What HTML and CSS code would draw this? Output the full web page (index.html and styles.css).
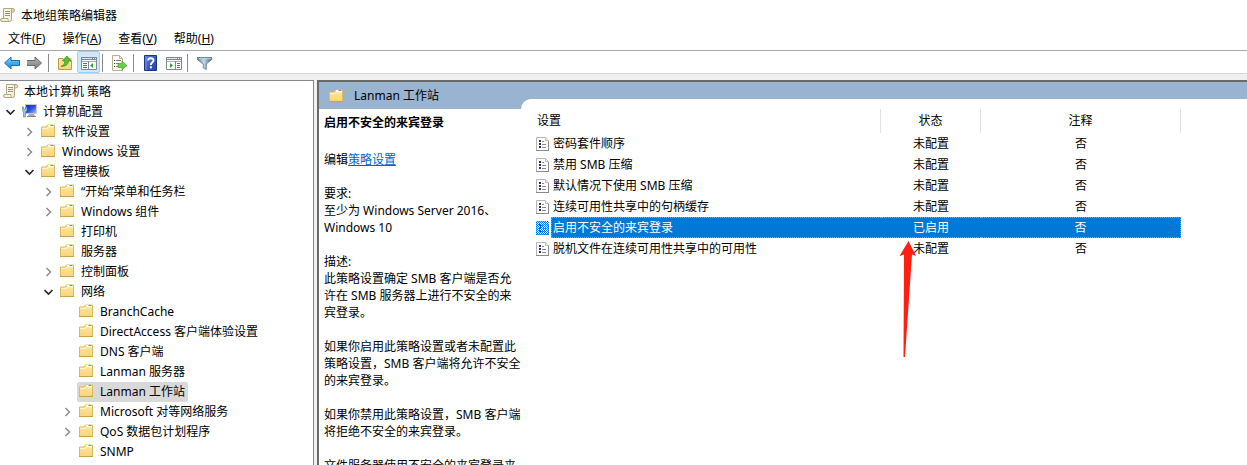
FILE: index.html
```html
<!DOCTYPE html>
<html lang="zh-CN">
<head>
<meta charset="utf-8">
<title>本地组策略编辑器</title>
<link rel="stylesheet" href="styles.css">
</head>
<body>
<svg class="defs" aria-hidden="true">
  <defs>
    <linearGradient id="gFolder" x1="0" y1="0" x2="0" y2="1"><stop offset="0" stop-color="#ffe7a2"/><stop offset="1" stop-color="#f8d478"/></linearGradient>
    <linearGradient id="gPaper" x1="0" y1="0" x2="1" y2="0"><stop offset="0" stop-color="#efe6cd"/><stop offset=".5" stop-color="#fdfaf0"/><stop offset="1" stop-color="#e6d8b4"/></linearGradient>
    <linearGradient id="gBlue" x1="0" y1="0" x2="0" y2="1"><stop offset="0" stop-color="#7fd0fa"/><stop offset="1" stop-color="#0f87dd"/></linearGradient>
    <linearGradient id="gGrey" x1="0" y1="0" x2="0" y2="1"><stop offset="0" stop-color="#b4b4b4"/><stop offset="1" stop-color="#7c7c7c"/></linearGradient>
    <linearGradient id="gHelp" x1="0" y1="0" x2="1" y2="1"><stop offset="0" stop-color="#5f7fd8"/><stop offset="1" stop-color="#1c3ea8"/></linearGradient>
    <linearGradient id="gScreen" x1="0" y1="0" x2="1" y2="1"><stop offset="0" stop-color="#0a1fb4"/><stop offset=".5" stop-color="#2c50e0"/><stop offset="1" stop-color="#a9c4f8"/></linearGradient>
    <linearGradient id="gFunnel" x1="0" y1="0" x2="1" y2="0"><stop offset="0" stop-color="#5d7f96"/><stop offset=".45" stop-color="#c3dbe8"/><stop offset="1" stop-color="#45657b"/></linearGradient>
    <pattern id="dither" width="2" height="2" patternUnits="userSpaceOnUse"><path fill="#0078d7" d="M0 0h1v1H0zM1 1h1v1H1z"/></pattern>
  </defs>
  <symbol id="folder" viewBox="0 0 16 16">
    <path d="M.5 13.500v-9.500h4.500l1.500-2h7v11.500z" fill="url(#gFolder)" stroke="#dcb964"/>
    <path d="M1 5.500h5.500l1.500-1.500h5" fill="none" stroke="#fff3c8"/>
    <path d="M7 2h6v1.500H7z" fill="#fff"/><path d="M9.500 2h3v1h-3z" fill="#4b9be0"/>
    <path d="M0 13.500h14" stroke="#c9a04c"/>
  </symbol>
  <symbol id="scroll" viewBox="0 0 16 16">
    <path d="M3.500 1.500H13q1.500 0 1.500 1.700T13 5h-1.500v7.500q0 2-2 2H2Q.5 14.500.500 13T2 11.500h1.500z" fill="url(#gPaper)" stroke="#b3a67f"/>
    <path d="M11.500 5V3q0-1.500 1.500-1.500M3.500 11.500H8V13q0 1.500 1.500 1.500" fill="none" stroke="#b3a67f"/>
    <path d="M5 4.500h5M5 6.500h5M5 8.500h5" stroke="#989080"/>
  </symbol>
  <symbol id="computer" viewBox="0 0 16 16">
    <path d="M3.500 1.500h11v9h-11z" fill="url(#gScreen)" stroke="#c5cad3"/>
    <path d="M7 11h5l1 2H6z" fill="#a2a9b5"/><path d="M5 13.500h9" stroke="#7c8592"/>
    <path d="M0 4h1.500v2h2V4H5v3.500L3.500 9v5h-2V9L0 7.500z" fill="#9cc3dc" stroke="#4d7c9c" stroke-width=".6"/>
  </symbol>
  <symbol id="setting" viewBox="0 0 14 16">
    <path d="M.5 1.500h9l3 3v10H.500z" fill="#fff" stroke="#b5b5b5"/>
    <path d="M9.500 1.500v3h3" fill="#ececec" stroke="#c0c0c0"/><path d="M0 14.500h13M12.500 5v10" stroke="#8a8a8a" fill="none"/>
    <path d="M3 4h2v2H3zM3 7h2v2H3zM3 10h2v2H3z" fill="#34344a"/>
    <path d="M6 5.500h2M6 8.500h4M6 11.500h4" stroke="#8a83a5"/>
  </symbol>
  <symbol id="closed" viewBox="0 0 10 10"><path d="M2.500 1l4 4-4 4" fill="none" stroke="#8b8b8b" stroke-width="1.500"/></symbol>
  <symbol id="open" viewBox="0 0 10 10"><path d="M.5 3l4 4 4-4" fill="none" stroke="#2b2b2b" stroke-width="1.700"/></symbol>
  <symbol id="window" viewBox="0 0 16 16">
    <path d="M.5 2.500h15v12H.500z" fill="#fff" stroke="#7f8793"/><path d="M0 2h16v3H0z" fill="#7f8793"/>
    <path d="M1 3.500h10" stroke="#dfe4ea"/><path d="M12 3.500h1M14 3.500h1" stroke="#fff"/><path d="M1 6.500h14" stroke="#a9b1bc"/>
  </symbol>
</svg>

<header class="titlebar">
  <svg class="icon"><use href="#scroll"/></svg>
  <h1>本地组策略编辑器</h1>
</header>

<nav class="menubar">
  <button type="button">文件(<u>F</u>)</button>
  <button type="button">操作(<u>A</u>)</button>
  <button type="button">查看(<u>V</u>)</button>
  <button type="button">帮助(<u>H</u>)</button>
</nav>

<div class="toolbar" role="toolbar">
  <button type="button" aria-label="后退"><svg class="icon" viewBox="0 0 16 16"><path d="M.5 8L7 2v3.500h8.500v5H7V14z" fill="url(#gBlue)" stroke="#1670b4"/></svg></button>
  <button type="button" aria-label="前进"><svg class="icon" viewBox="0 0 16 16"><path d="M14.500 8L8 2v3.500H-.500v5H8V14z" fill="url(#gGrey)" stroke="#6b6b6b"/></svg></button>
  <span class="separator"></span>
  <button type="button" aria-label="上一级"><svg class="icon" viewBox="0 0 16 16"><path d="M.5 14.500v-11h4.500l1.500 2h7v9z" fill="url(#gFolder)" stroke="#c39b48"/><path d="M9 3h4.500v2.500H9z" fill="#e8bd61"/><path d="M3 11.500q4-1 4-5.500H4.500L9 1l4 5h-2.500q0 5-7.500 5.500z" fill="#54c32d" stroke="#2c8b1b" stroke-width=".7"/></svg></button>
  <button type="button" class="pressed" aria-label="显示/隐藏控制台树" aria-pressed="true"><svg class="icon" viewBox="0 0 16 16"><use href="#window"/><path d="M7.500 6v8" stroke="#7f8793"/><path d="M2 8.500h4M2 10.500h4M2 12.500h4" stroke="#5272a5"/><path d="M12 8v5l-3-2.500z" fill="#2ba52b"/></svg></button>
  <span class="separator"></span>
  <button type="button" aria-label="导出列表"><svg class="icon" viewBox="0 0 16 16"><path d="M.5.500h7l3 3v12H.500z" fill="#fffbea" stroke="#b5b09b"/><path d="M7.500.500v3h3" fill="none" stroke="#b5b09b"/><path d="M4 5.500h5M4 8.500h3M4 11.500h3" stroke="#777"/><path d="M2 5.500h1M2 8.500h1M2 11.500h1" stroke="#333"/><path d="M6 8.500h4V6l5 4.500-5 4.500v-2.500H6z" fill="#6bce49" stroke="#3ba326" stroke-width=".6"/></svg></button>
  <span class="separator"></span>
  <button type="button" aria-label="帮助"><svg class="icon" viewBox="0 0 16 16"><path d="M1.500.500h12v15h-12z" fill="url(#gHelp)" stroke="#1a348d"/><path d="M3 1v14" stroke="#7e98df"/><path d="M5.200 5.500Q5.200 3.200 7.800 3.200T10.500 5.400q0 1.200-1.300 2T7.900 10" fill="none" stroke="#fff" stroke-width="1.900"/><path d="M6.900 11.300h2v2h-2z" fill="#fff"/></svg></button>
  <button type="button" aria-label="显示/隐藏操作窗格"><svg class="icon" viewBox="0 0 16 16"><use href="#window"/><path d="M9.500 6v8" stroke="#7f8793"/><path d="M11 8.500h3M11 10.500h3M11 12.500h3" stroke="#5272a5"/><path d="M4 8v5l3-2.500z" fill="#2ba52b"/></svg></button>
  <span class="separator"></span>
  <button type="button" aria-label="筛选器"><svg class="icon" viewBox="0 0 16 16"><path d="M.2 2.500h14.600v2L9.300 9v5.500l-3-1.500V9L.200 4.500z" fill="url(#gFunnel)" stroke="#56758a" stroke-width=".8"/><path d="M2 3.700h12" stroke="#b9d4e4"/></svg></button>
</div>

<main class="workspace">
  <nav class="tree" aria-label="控制台树">
    <div class="node root"><a class="item" href="#root"><svg class="icon"><use href="#scroll"/></svg>本地计算机 策略</a></div>
    <ul>
      <li>
        <div class="node"><button type="button" class="toggle" aria-label="折叠"><svg><use href="#open"/></svg></button><a class="item" href="#computer-config"><svg class="icon"><use href="#computer"/></svg>计算机配置</a></div>
        <ul>
          <li><div class="node"><button type="button" class="toggle" aria-label="展开"><svg><use href="#closed"/></svg></button><a class="item" href="#n1"><svg class="icon"><use href="#folder"/></svg>软件设置</a></div></li>
          <li><div class="node"><button type="button" class="toggle" aria-label="展开"><svg><use href="#closed"/></svg></button><a class="item" href="#n2"><svg class="icon"><use href="#folder"/></svg>Windows 设置</a></div></li>
          <li>
            <div class="node"><button type="button" class="toggle" aria-label="折叠"><svg><use href="#open"/></svg></button><a class="item" href="#n3"><svg class="icon"><use href="#folder"/></svg>管理模板</a></div>
            <ul>
              <li><div class="node"><button type="button" class="toggle" aria-label="展开"><svg><use href="#closed"/></svg></button><a class="item" href="#n4"><svg class="icon"><use href="#folder"/></svg>“开始”菜单和任务栏</a></div></li>
              <li><div class="node"><button type="button" class="toggle" aria-label="展开"><svg><use href="#closed"/></svg></button><a class="item" href="#n5"><svg class="icon"><use href="#folder"/></svg>Windows 组件</a></div></li>
              <li><div class="node leaf"><a class="item" href="#n6"><svg class="icon"><use href="#folder"/></svg>打印机</a></div></li>
              <li><div class="node leaf"><a class="item" href="#n7"><svg class="icon"><use href="#folder"/></svg>服务器</a></div></li>
              <li><div class="node"><button type="button" class="toggle" aria-label="展开"><svg><use href="#closed"/></svg></button><a class="item" href="#n8"><svg class="icon"><use href="#folder"/></svg>控制面板</a></div></li>
              <li>
                <div class="node"><button type="button" class="toggle" aria-label="折叠"><svg><use href="#open"/></svg></button><a class="item" href="#n9"><svg class="icon"><use href="#folder"/></svg>网络</a></div>
                <ul>
                  <li><div class="node leaf"><a class="item" href="#n10"><svg class="icon"><use href="#folder"/></svg>BranchCache</a></div></li>
                  <li><div class="node leaf"><a class="item" href="#n11"><svg class="icon"><use href="#folder"/></svg>DirectAccess 客户端体验设置</a></div></li>
                  <li><div class="node leaf"><a class="item" href="#n12"><svg class="icon"><use href="#folder"/></svg>DNS 客户端</a></div></li>
                  <li><div class="node leaf"><a class="item" href="#n13"><svg class="icon"><use href="#folder"/></svg>Lanman 服务器</a></div></li>
                  <li><div class="node leaf"><a class="item selected" href="#n14"><svg class="icon"><use href="#folder"/></svg>Lanman 工作站</a></div></li>
                  <li><div class="node"><button type="button" class="toggle" aria-label="展开"><svg><use href="#closed"/></svg></button><a class="item" href="#n15"><svg class="icon"><use href="#folder"/></svg>Microsoft 对等网络服务</a></div></li>
                  <li><div class="node"><button type="button" class="toggle" aria-label="展开"><svg><use href="#closed"/></svg></button><a class="item" href="#n16"><svg class="icon"><use href="#folder"/></svg>QoS 数据包计划程序</a></div></li>
                  <li><div class="node leaf"><a class="item" href="#n17"><svg class="icon"><use href="#folder"/></svg>SNMP</a></div></li>
                </ul>
              </li>
            </ul>
          </li>
        </ul>
      </li>
    </ul>
  </nav>

  <section class="pane">
    <header class="pane-title">
      <h2><svg class="icon"><use href="#folder"/></svg>Lanman 工作站</h2>
      <div class="tab-cap"></div>
    </header>
    <div class="pane-body">
      <article class="details">
        <h3>启用不安全的来宾登录</h3>
        <p>编辑<a href="#edit">策略设置</a></p>
        <p>要求:<br>至少为 Windows Server 2016、<br>Windows 10</p>
        <p>描述:<br>此策略设置确定 SMB 客户端是否允<br>许在 SMB 服务器上进行不安全的来<br>宾登录。</p>
        <p>如果你启用此策略设置或者未配置此<br>策略设置，SMB 客户端将允许不安全<br>的来宾登录。</p>
        <p>如果你禁用此策略设置，SMB 客户端<br>将拒绝不安全的来宾登录。</p>
        <p>文件服务器使用不安全的来宾登录来</p>
      </article>
      <div class="list">
        <table>
          <colgroup><col class="col-name"><col class="col-state"><col class="col-note"></colgroup>
          <thead><tr><th>设置</th><th>状态</th><th>注释</th></tr></thead>
          <tbody>
            <tr><td><div class="name"><svg><use href="#setting"/></svg><span>密码套件顺序</span></div></td><td>未配置</td><td>否</td></tr>
            <tr><td><div class="name"><svg><use href="#setting"/></svg><span>禁用 SMB 压缩</span></div></td><td>未配置</td><td>否</td></tr>
            <tr><td><div class="name"><svg><use href="#setting"/></svg><span>默认情况下使用 SMB 压缩</span></div></td><td>未配置</td><td>否</td></tr>
            <tr><td><div class="name"><svg><use href="#setting"/></svg><span>连续可用性共享中的句柄缓存</span></div></td><td>未配置</td><td>否</td></tr>
            <tr class="active"><td><div class="name"><svg><use href="#setting"/><path d="M0 1h13v14H0z" fill="url(#dither)"/></svg><span>启用不安全的来宾登录</span></div></td><td>已启用</td><td>否</td></tr>
            <tr><td><div class="name"><svg><use href="#setting"/></svg><span>脱机文件在连续可用性共享中的可用性</span></div></td><td>未配置</td><td>否</td></tr>
          </tbody>
        </table>
        <svg class="arrow" viewBox="0 0 18 117" aria-hidden="true"><path d="M9.500 0L17 15l-4-1.500L6 116H4.500L5 13.500.500 15z" fill="#ff2012"/></svg>
      </div>
    </div>
  </section>
</main>
</body>
</html>
```

FILE: styles.css
```css
* { box-sizing: border-box; }

body {
  margin: 0;
  height: 100vh;
  overflow: hidden;
  display: flex;
  flex-direction: column;
  background: #fff;
  color: #000;
  font: 12px/17px "Noto Sans", "Noto Sans CJK SC", sans-serif;
}

h1, h2, h3, p, ul { margin: 0; padding: 0; font-size: inherit; font-weight: normal; }
ul { list-style: none; }
button { padding: 0; border: 0; background: none; color: inherit; font: inherit; }
svg { display: block; flex: none; }
.defs { position: absolute; width: 0; height: 0; }
.icon { width: 16px; height: 16px; }

.titlebar { flex: none; display: flex; align-items: center; gap: 5px; height: 30px; }

.menubar {
  flex: none;
  display: flex;
  align-items: center;
  gap: 17px;
  height: 21px;
  padding: 0 8px 4px;
  border-bottom: 1px solid #a9a9a9;
}

.toolbar {
  flex: none;
  display: flex;
  height: 23px;
  border-bottom: 1px solid #d5d5d5;
}
.toolbar button { display: flex; align-items: center; justify-content: center; width: 23px; padding-top: 2px; }
.toolbar .pressed { background: #cce8ff; border: 1px solid #99d1ff; border-radius: 2px; }
.separator { width: 8px; padding: 3px 0 1px 2px; }
.separator::before { content: ""; display: block; width: 1px; height: 100%; background: #8a8a8a; }

.workspace {
  flex: 1;
  min-height: 0;
  display: flex;
  gap: 3px;
  padding-top: 6px;
  background: #f0f0f0;
}

.tree {
  flex: none;
  width: 314px;
  overflow: hidden;
  padding-top: 1px;
  border: solid #828790;
  border-width: 1px 1px 0 0;
  background: #fff;
}
.tree ul ul { padding-left: 19px; }
.node { display: flex; align-items: center; height: 20px; padding-left: 1px; }
.leaf { padding-left: 20px; }
.toggle { display: flex; align-items: center; justify-content: center; width: 19px; height: 20px; }
.toggle svg { width: 10px; height: 10px; }
.item {
  display: flex;
  align-items: center;
  gap: 5px;
  height: 20px;
  padding: 0 3px 2px 2px;
  border-radius: 2px;
  color: inherit;
  text-decoration: none;
  white-space: nowrap;
}
.item.selected { background: #d9d9d9; }

.pane {
  flex: 1;
  min-width: 0;
  display: flex;
  flex-direction: column;
  border: solid #696969;
  border-width: 2px 0 0 2px;
  background: #fff;
}
.pane-title { flex: none; display: flex; height: 27px; background: #99b4d1; }
.pane-title h2 { flex: none; display: flex; align-items: center; gap: 9px; width: 202px; padding-left: 10px; }
.tab-cap { flex: 1; align-self: flex-end; height: 10px; border-top-left-radius: 10px; background: #fff; }
.pane-body { flex: 1; min-height: 0; display: flex; }

.details { flex: none; width: 217px; padding: 5px; overflow: hidden; white-space: nowrap; }
.details h3 { margin-bottom: 20px; font-weight: bold; }
.details p { margin-bottom: 17px; }
.details a { color: #0066cc; }

.list { position: relative; flex: 1; min-width: 0; }
table { width: 645px; table-layout: fixed; border-collapse: separate; border-spacing: 0; }
.col-name { width: 345px; }
.col-state { width: 100px; }
.col-note { width: 200px; }
th { height: 24px; padding: 0 0 2px; border-right: 1px solid #e2e2e2; font-weight: normal; }
th:first-child { padding-left: 1px; text-align: left; }
td { height: 21px; padding: 0; text-align: center; }
.name { display: flex; align-items: center; gap: 1px; text-align: left; }
.name svg { width: 14px; height: 16px; }
.name span { flex: 1; height: 21px; padding-left: 2px; line-height: 21px; }
.active span, .active td + td {
  background: #0078d7;
  color: #fff;
  border: dotted #f08a2c;
  border-width: 1px 0;
}
.active span { border-left-width: 1px; padding-left: 1px; line-height: 19px; }
.active td:last-child { border-right-width: 1px; }

.arrow { position: absolute; top: 132px; left: 363px; width: 18px; height: 117px; }
```
